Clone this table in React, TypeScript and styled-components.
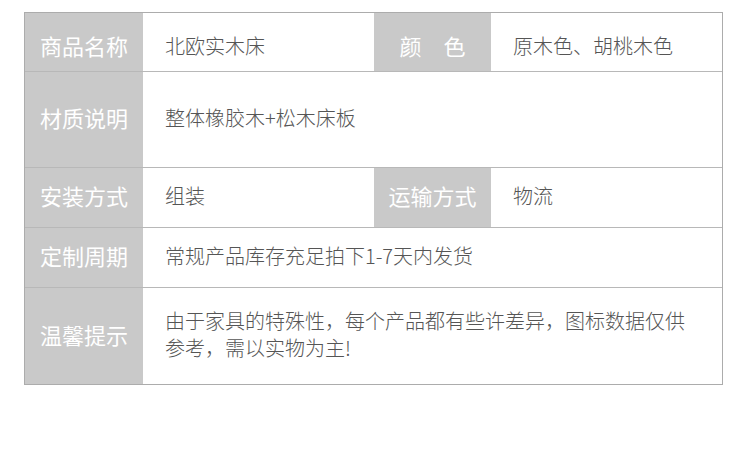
import styled, { createGlobalStyle } from "styled-components";

const Global = createGlobalStyle`
  body {
    margin: 0;
    background: #fff;
    font-family: "Noto Sans CJK SC", "Noto Sans", sans-serif;
  }
`;

const Page = styled.div`
  padding: 12px 0 0 24px;
`;

const Table = styled.div`
  width: 699px;
  box-sizing: border-box;
  border: 1px solid #acacac;
`;

const Row = styled.div<{ $h: number; $split?: boolean; $shift?: number }>`
  display: grid;
  grid-template-columns: ${(p) => (p.$split ? "118px 231px 117px 1fr" : "118px 1fr")};
  height: ${(p) => p.$h}px;
  & + & {
    border-top: 1px solid #b8b8b8;
  }
  & > * {
    padding-top: ${(p) => p.$shift ?? 0}px;
  }
`;

const Label = styled.div`
  background: #c9c9c9;
  color: #fff;
  font-size: 22px;
  display: flex;
  align-items: center;
  justify-content: center;
  padding-bottom: 5px;
  white-space: pre;
`;

const Value = styled.div`
  color: #555;
  font-size: 20px;
  font-weight: 300;
  line-height: 27px;
  display: flex;
  align-items: center;
  padding-left: 22px;
  padding-right: 22px;
  padding-bottom: 4px;
`;

export default function App() {
  return (
    <Page>
      <Global />
      <Table>
        <Row $h={58} $split $shift={11}>
          <Label>商品名称</Label>
          <Value>北欧实木床</Value>
          <Label>颜　色</Label>
          <Value>原木色、胡桃木色</Value>
        </Row>
        <Row $h={95}>
          <Label>材质说明</Label>
          <Value>整体橡胶木+松木床板</Value>
        </Row>
        <Row $h={59} $split>
          <Label>安装方式</Label>
          <Value>组装</Value>
          <Label>运输方式</Label>
          <Value>物流</Value>
        </Row>
        <Row $h={59}>
          <Label>定制周期</Label>
          <Value>常规产品库存充足拍下1-7天内发货</Value>
        </Row>
        <Row $h={96}>
          <Label>温馨提示</Label>
          <Value>由于家具的特殊性，每个产品都有些许差异，图标数据仅供参考，需以实物为主!</Value>
        </Row>
      </Table>
    </Page>
  );
}
